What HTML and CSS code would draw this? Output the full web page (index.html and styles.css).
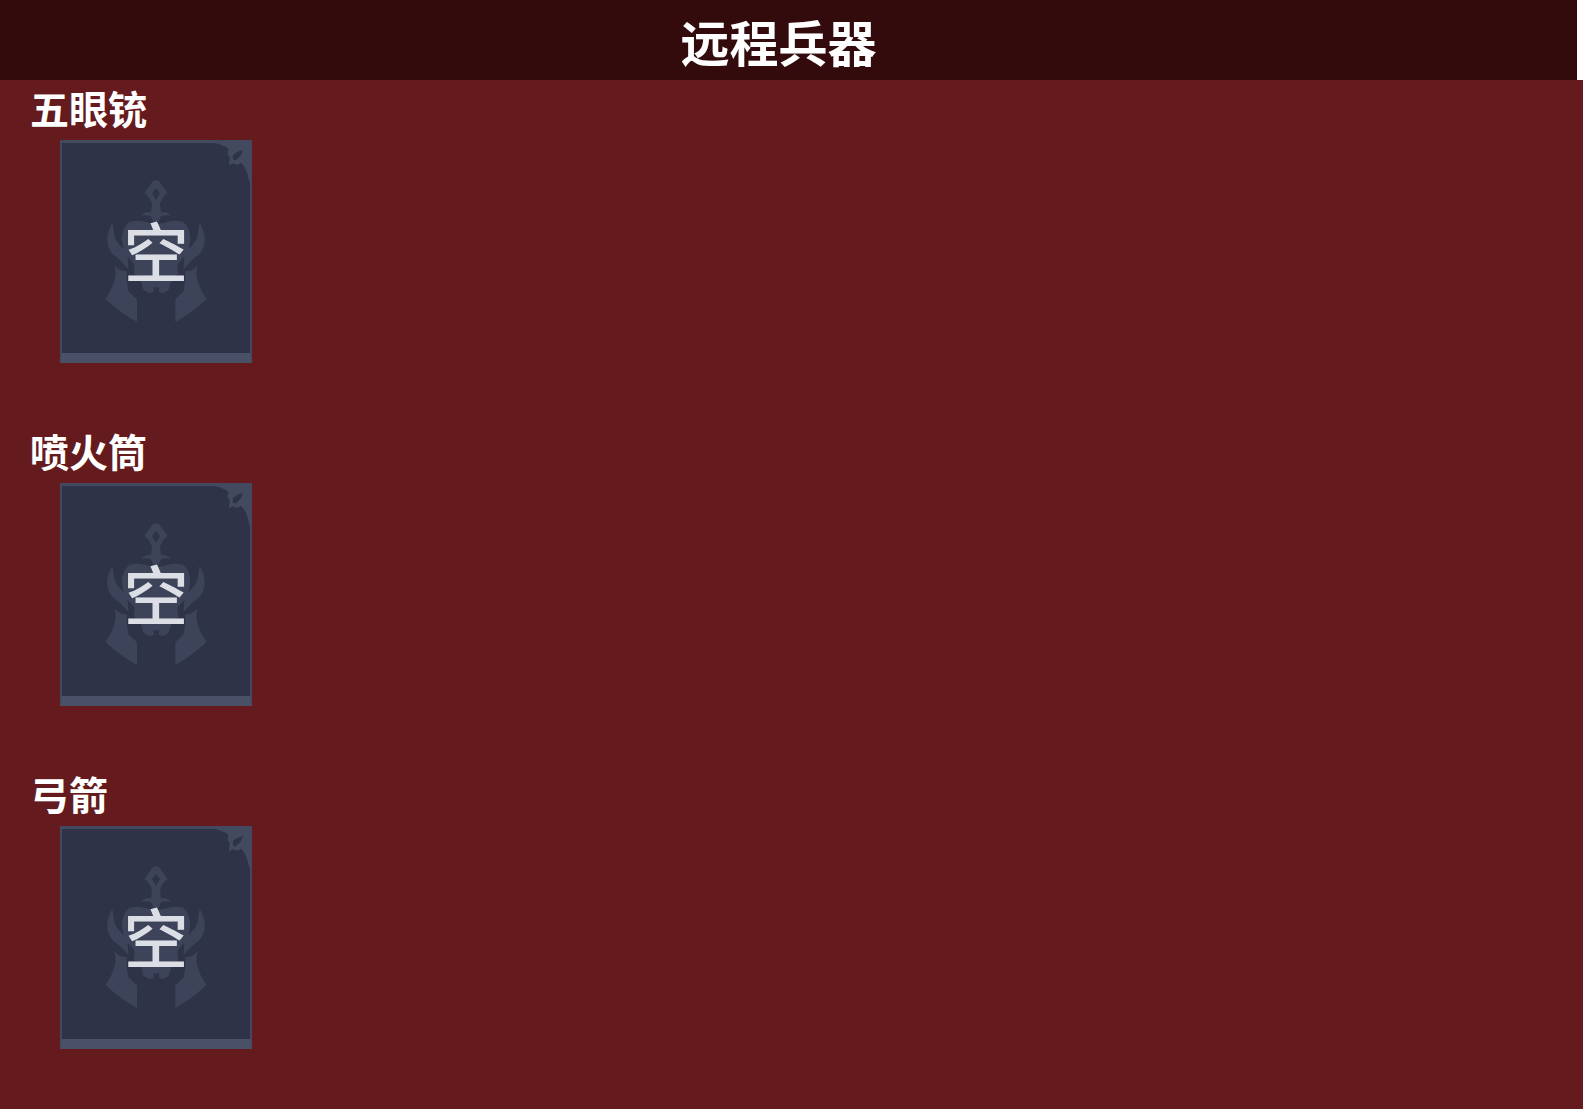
FILE: index.html
```html
<!DOCTYPE html>
<html lang="zh-CN">
<head>
<meta charset="utf-8">
<meta name="viewport" content="width=device-width, initial-scale=1">
<title>远程兵器</title>
<link rel="stylesheet" href="styles.css">
</head>
<body>
<svg class="defs" aria-hidden="true">
  <symbol id="slot-art" viewBox="0 0 576 669">
    <path class="trim" d="M455 8 Q480 10 500 22 L506 28 L502 42 L509 50 L507 76 L519 70 L532 74 L543 68 Q560 82 568 125 L576 125 V0 H455Z"/>
    <path class="notch" d="M519 44 L533 35 L549 30 L542 47 L526 62 L518 58Z"/>
    <g class="emblem">
      <path fill-rule="evenodd" d="M288 121 Q299 121 303 132 L323 159 Q304 172 300 193 L303 217 Q322 213 331 227 Q314 223 302 230 L296 245 H280 L274 230 Q262 223 245 227 Q254 213 273 217 L276 193 Q272 172 253 159 L273 132 Q277 121 288 121Z M288 144 L276 160 L288 180 L300 160Z"/>
      <path d="M208 246 Q240 237 270 250 H308 Q338 237 370 246 Q390 262 391 295 Q388 338 366 366 L356 402 Q334 408 326 450 L310 459 L296 456 L298 442 H280 L282 456 L268 459 L250 450 Q244 408 222 402 L212 366 Q188 338 185 295 Q188 262 208 246Z"/>
      <path d="M157 248 Q139 280 142 305 Q146 332 160 344 Q186 362 206 388 L220 372 Q209 346 190 326 Q169 306 164 290Z"/>
      <path d="M419 248 Q437 280 434 305 Q430 332 416 344 Q390 362 370 388 L356 372 Q367 346 386 326 Q407 306 412 290Z"/>
      <path d="M163 374 Q176 394 200 393 Q200 434 206 455 L231 478 V546 Q182 520 136 476 Q158 449 166 411 Q168 391 163 374Z"/>
      <path d="M413 374 Q400 394 376 393 Q376 434 370 455 L346 478 V546 Q394 520 440 476 Q418 449 410 411 Q408 391 413 374Z"/>
    </g>
    <path class="shade" d="M203 350 L223 372 V398 H206Z M373 350 L353 372 V398 H370Z"/>
  </symbol>
</svg>
<header class="banner"><h1 class="banner-title">远程兵器</h1></header>
<main class="weapons">
  <section class="weapon">
    <h2 class="weapon-name">五眼铳</h2>
    <div class="slot"><svg class="slot-art" aria-hidden="true"><use href="#slot-art"/></svg><span class="slot-label">空</span></div>
  </section>
  <section class="weapon">
    <h2 class="weapon-name">喷火筒</h2>
    <div class="slot"><svg class="slot-art" aria-hidden="true"><use href="#slot-art"/></svg><span class="slot-label">空</span></div>
  </section>
  <section class="weapon">
    <h2 class="weapon-name">弓箭</h2>
    <div class="slot"><svg class="slot-art" aria-hidden="true"><use href="#slot-art"/></svg><span class="slot-label">空</span></div>
  </section>
</main>
</body>
</html>
```
FILE: styles.css
```css
* {
  box-sizing: border-box;
}

body {
  margin: 0;
  min-height: 100vh;
  background: #651a1e;
  color: #fff;
  font-family: "Noto Sans CJK SC", sans-serif;
}

.defs {
  display: none;
}

.banner {
  display: flex;
  align-items: center;
  justify-content: center;
  height: 80px;
  padding: 2px 20px 0 0;
  background: #330b0d;
  border-right: 6px solid #fff;
}

.banner-title {
  margin: 0;
  font-size: 49px;
  line-height: 72px;
  font-weight: 700;
}

.weapons {
  padding-left: 30px;
}

.weapon {
  padding-bottom: 60px;
}

.weapon-name {
  margin: 0;
  padding-bottom: 6px;
  font-size: 39px;
  line-height: 54px;
  font-weight: 700;
}

.slot {
  display: grid;
  place-items: center;
  width: 192px;
  height: 223px;
  margin-left: 30px;
  background: #2e3348;
  border: solid #434a60;
  border-width: 3px 2px 10px;
  border-bottom-color: #4a5167;
}

.slot-art,
.slot-label {
  grid-area: 1 / 1;
}

.slot-art {
  width: 192px;
  height: 223px;
  margin: -3px -2px -10px;
}

.slot-label {
  padding-top: 2px;
  color: #dcdee6;
  font-size: 65px;
  line-height: 80px;
  font-weight: 500;
}

.trim {
  fill: #434a60;
}

.notch,
.shade {
  fill: #2e3348;
}

.emblem {
  fill: #3d4358;
}
```
